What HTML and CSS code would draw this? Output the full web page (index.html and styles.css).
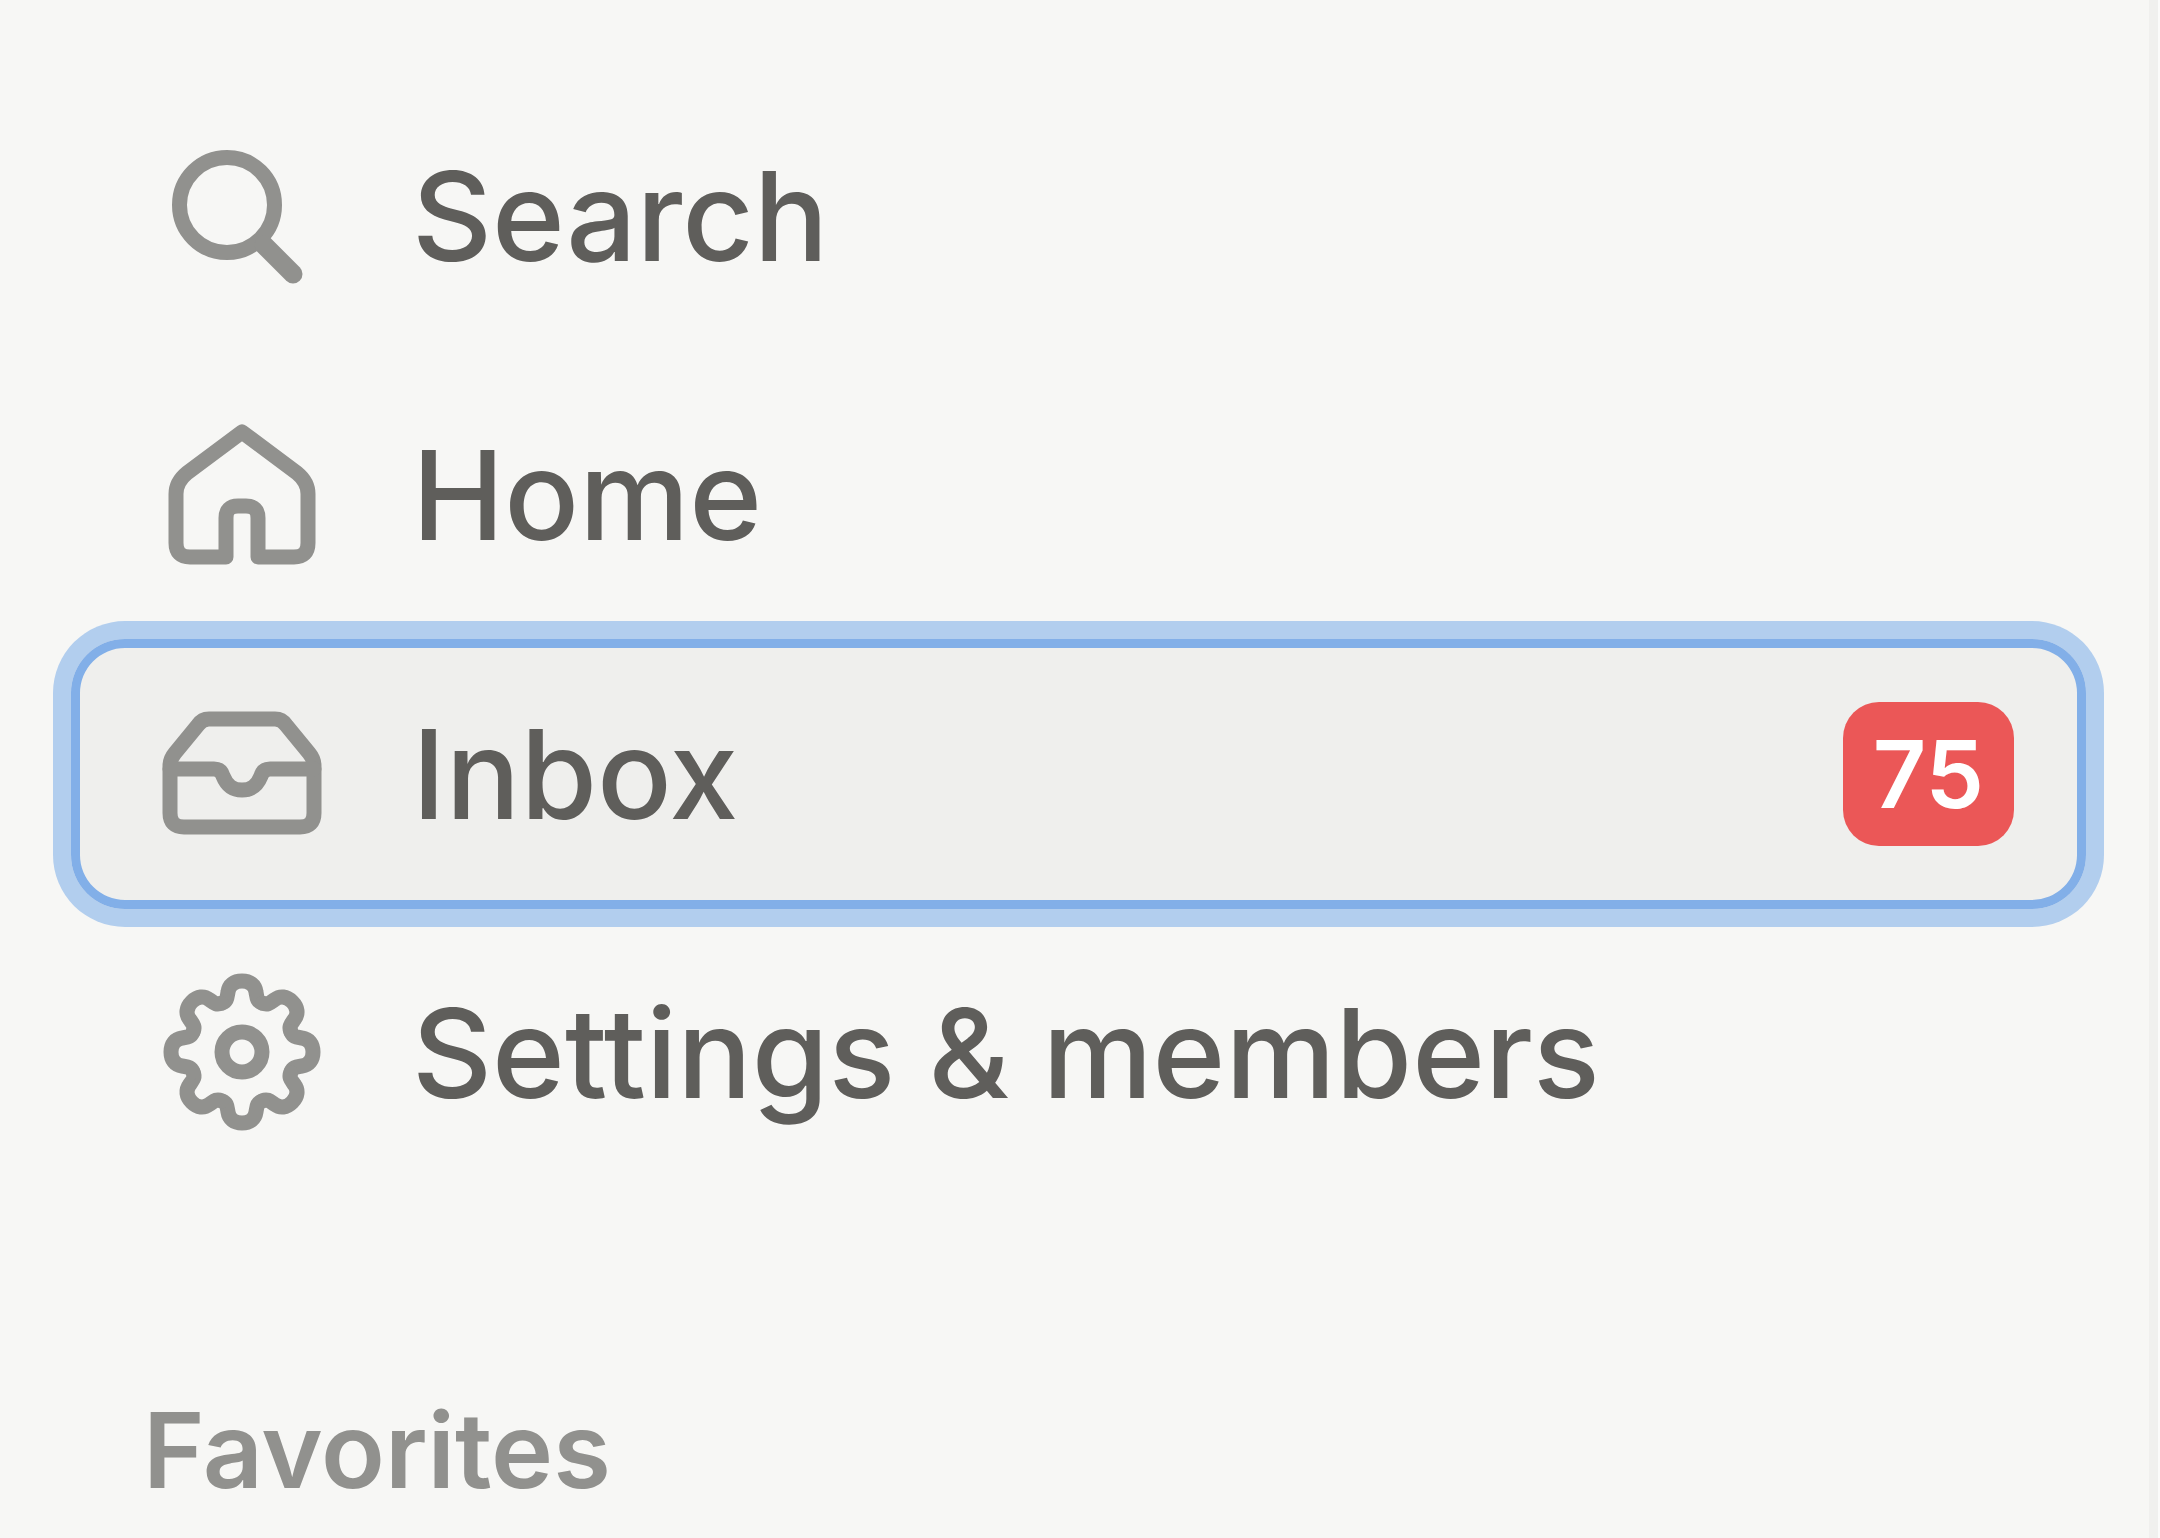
FILE: index.html
```html
<!DOCTYPE html>
<html lang="en">
    <head>
    <meta charset="utf-8">
    <meta name="viewport" content="width=device-width, initial-scale=1.0">
    <title>Sidebar</title>
    <link rel="stylesheet" href="styles.css">
    </head>

    <body>
    <aside class="sidebar">
        <nav class="menu">
            <a class="item" href="#search">
                <svg class="icon" viewBox="0 0 180 180" aria-hidden="true">
                    <circle cx="75" cy="79" r="47.5"/>
                    <path class="handle" d="M112 119L141 148"/>
                </svg>
                <span>Search</span>
            </a>
            <a class="item" href="#home">
                <svg class="icon" viewBox="0 0 180 180" aria-hidden="true">
                    <path d="M90 27L35 68Q24 77 24 89V138Q24 152 38 152H74V113Q74 101 86 101H94Q106 101 106 113V152H142Q156 152 156 138V89Q156 77 145 68Z"/>
                </svg>
                <span>Home</span>
            </a>
            <a class="item active" href="#inbox">
                <svg class="icon" viewBox="0 0 180 180" aria-hidden="true">
                    <path d="M57 35H123Q130 35 134 41L157 69Q162 75 162 82V129Q162 143 148 143H32Q18 143 18 129V82Q18 75 23 69L46 41Q50 35 57 35Z"/>
                    <path d="M18 85H62Q69 85 71 92C75 102 81 106 90 106C99 106 105 102 109 92Q111 85 118 85H162"/>
                </svg>
                <span>Inbox</span>
                <span class="badge">75</span>
            </a>
            <a class="item" href="#settings">
                <svg class="icon" viewBox="0 0 180 180" aria-hidden="true">
                    <defs>
                        <path id="tooth" d="M-20 -49C-15 -51 -15 -54 -14 -60C-13 -67 -8 -71 0 -71C8 -71 13 -67 14 -60C15 -54 15 -51 20 -49"/>
                    </defs>
                    <g transform="translate(90 89)">
                        <circle r="20"/>
                        <use href="#tooth"/>
                        <use href="#tooth" transform="rotate(45)"/>
                        <use href="#tooth" transform="rotate(90)"/>
                        <use href="#tooth" transform="rotate(135)"/>
                        <use href="#tooth" transform="rotate(180)"/>
                        <use href="#tooth" transform="rotate(225)"/>
                        <use href="#tooth" transform="rotate(270)"/>
                        <use href="#tooth" transform="rotate(315)"/>
                    </g>
                </svg>
                <span>Settings &amp; members</span>
            </a>
        </nav>
        <h2 class="section">Favorites</h2>
    </aside>
    </body>
</html>
```
FILE: styles.css
```css
* {
    box-sizing: border-box;
}
body {
    margin: 0;
    background-color: #fbfbfa;
    font-family: Inter, "Liberation Sans", sans-serif;
}
.sidebar {
    min-height: 100vh;
    margin-right: 2px;
    padding: 81px 63px 0 71px;
    border-right: 9px solid #f0f0ee;
    background-color: #f7f7f5;
}
.menu {
    display: flex;
    flex-direction: column;
    gap: 9px;
}
.item {
    display: flex;
    align-items: center;
    gap: 80px;
    height: 270px;
    padding: 0 72px 0 81px;
    border-radius: 54px;
    color: #5f5e5b;
    font-size: 124px;
    font-weight: 500;
    text-decoration: none;
    white-space: nowrap;
}
.item.active {
    background-color: #efefed;
    box-shadow: inset 0 0 0 9px #82afe8, 0 0 0 18px #b2ceee;
}
.icon {
    flex: none;
    width: 180px;
    height: 180px;
    fill: none;
    stroke: #91918e;
    stroke-width: 15px;
    stroke-linecap: round;
    stroke-linejoin: round;
}
.handle {
    stroke-width: 19px;
}
.badge {
    margin-left: auto;
    padding: 0 30px;
    border-radius: 36px;
    background-color: #eb5757;
    color: #fff;
    font-size: 93px;
    font-weight: 600;
    line-height: 144px;
}
.section {
    margin: 199px 0 0;
    padding-left: 72px;
    color: #91918e;
    font-size: 105px;
    font-weight: 600;
    line-height: 126px;
}
```
